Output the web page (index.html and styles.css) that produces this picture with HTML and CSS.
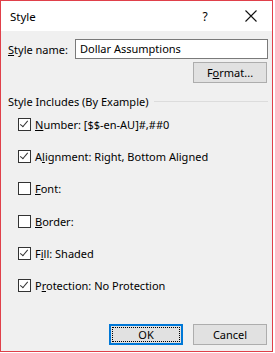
FILE: index.html
```html
<!DOCTYPE html>
<html lang="en">

<head>
    <meta charset="UTF-8" />
    <meta name="viewport" content="width=device-width, initial-scale=1.0" />
    <title>Style</title>
    <link rel="stylesheet" href="styles.css">
</head>

<body>

    <div class="dialog">
        <div class="titlebar">
            <span class="title">Style</span>
            <span class="help">?</span>
            <span class="close">
                <svg width="12" height="12" viewBox="0 0 12 12">
                    <path d="M0.5 0.5 L11.5 11.5 M11.5 0.5 L0.5 11.5" stroke="#111" stroke-width="1.1" fill="none" />
                </svg>
            </span>
        </div>

        <div class="content">
            <div class="name-row">
                <label><u>S</u>tyle name:</label>
                <div class="textbox">Dollar Assumptions</div>
            </div>

            <div class="format-row">
                <button class="btn">F<u>o</u>rmat...</button>
            </div>

            <div class="group-title">
                <span>Style Includes (By Example)</span>
                <div class="rule"></div>
            </div>

            <!-- opcoes da lista -->
            <div class="options">
                <div class="option"><span class="box checked"></span><span><u>N</u>umber: [$$-en-AU]#,##0</span></div>
                <div class="option"><span class="box checked"></span><span>A<u>l</u>ignment: Right, Bottom Aligned</span></div>
                <div class="option"><span class="box"></span><span><u>F</u>ont:</span></div>
                <div class="option"><span class="box"></span><span><u>B</u>order:</span></div>
                <div class="option"><span class="box checked"></span><span>F<u>i</u>ll: Shaded</span></div>
                <div class="option"><span class="box checked"></span><span>P<u>r</u>otection: No Protection</span></div>
            </div>

            <div class="button-group">
                <button class="btn default"><span class="focus">OK</span></button>
                <button class="btn">Cancel</button>
            </div>
        </div>
    </div>

</body>

</html>
```

FILE: styles.css
```css
body {
    margin: 0;
    background: #fff;
    font-family: "Noto Sans", Arial, sans-serif;
    font-size: 11px;
    color: #000;
}

.dialog {
    width: 271px;
    height: 350px;
    border: 1px solid #e0404a;
    background: #f0f0f0;
    display: flex;
    flex-direction: column;
}

.titlebar {
    height: 30px;
    background: #fff;
    display: flex;
    align-items: center;
    padding-left: 9px;
}

.title {
    flex: 1;
    font-size: 11.5px;
}

.help {
    width: 12px;
    margin-right: 34px;
    text-align: center;
    font-size: 12px;
}

.close {
    width: 12px;
    height: 12px;
    margin-right: 15px;
    display: flex;
}

.content {
    flex: 1;
    display: flex;
    flex-direction: column;
    padding: 8px 4px 0 7px;
}

.name-row {
    display: flex;
    align-items: center;
    height: 20px;
}

.name-row label {
    width: 67px;
    flex-shrink: 0;
}

.textbox {
    flex-shrink: 0;
    width: 187px;
    height: 18px;
    line-height: 18px;
    border: 1px solid #7a7a7a;
    background: #fff;
    padding-left: 4px;
}

.format-row {
    display: flex;
    justify-content: flex-end;
    margin-top: 3px;
    padding-right: 1px;
}

.btn {
    width: 74px;
    height: 21px;
    padding: 0;
    background: #e1e1e1;
    border: 1px solid #adadad;
    font-family: inherit;
    font-size: 11px;
    color: #000;
    display: flex;
    align-items: center;
    justify-content: center;
}

.btn.default {
    border: 2px solid #0078d7;
    padding: 1px;
}

.btn .focus {
    flex: 1;
    align-self: stretch;
    border: 1px dotted #000;
    display: flex;
    align-items: center;
    justify-content: center;
}

.group-title {
    display: flex;
    align-items: center;
    height: 13px;
    margin-top: 12px;
}

.group-title .rule {
    flex: 1;
    height: 1px;
    background: #dcdcdc;
    margin-left: 6px;
}

.options {
    display: flex;
    flex-direction: column;
    padding-left: 10px;
}

.option {
    height: 32.3px;
    display: flex;
    align-items: center;
    gap: 4px;
}

.box {
    width: 11px;
    height: 11px;
    border: 1px solid #333;
    background: #fff;
    position: relative;
}

.box.checked::after {
    content: "";
    position: absolute;
    left: 3px;
    top: 0px;
    width: 3px;
    height: 7px;
    border-right: 1px solid #333;
    border-bottom: 1px solid #333;
    transform: rotate(40deg);
}

.button-group {
    display: flex;
    justify-content: flex-end;
    gap: 10px;
    margin-top: 22px;
    padding-right: 1px;
}
```
